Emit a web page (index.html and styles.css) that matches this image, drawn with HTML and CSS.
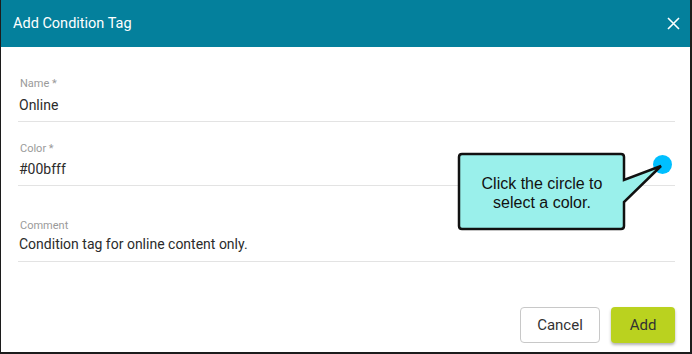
FILE: index.html
```html
<!DOCTYPE html>
<html lang="en">
<head>
    <meta charset="UTF-8">
    <meta name="viewport" content="width=device-width, initial-scale=1.0">
    <title>Add Condition Tag</title>
    <link rel="stylesheet" href="styles.css">
</head>
<body>
    <div class="dialog">
        <header class="dialog-header">
            <span class="dialog-title">Add Condition Tag</span>
            <button class="close" aria-label="Close">
                <svg width="13" height="13" viewBox="0 0 13 13">
                    <path d="M1 1 L12 12 M12 1 L1 12" stroke="#fff" stroke-width="1.6" fill="none"/>
                </svg>
            </button>
        </header>

        <div class="form">
            <div class="field">
                <label>Name *</label>
                <div class="value">Online</div>
            </div>

            <div class="field color-field">
                <label>Color *</label>
                <div class="value">#00bfff</div>
                <span class="swatch"></span>
            </div>

            <div class="field comment-field">
                <label>Comment</label>
                <div class="value">Condition tag for online content only.</div>
            </div>
        </div>

        <div class="footer">
            <button class="btn btn-cancel">Cancel</button>
            <button class="btn btn-add">Add</button>
        </div>

        <!-- annotation callout -->
        <svg class="callout" width="692" height="354" viewBox="0 0 692 354">
            <path d="M462 154 H621 Q624 154 624 157 V180 L661 166 L624 202 V226 Q624 229 621 229 H462 Q459 229 459 226 V157 Q459 154 462 154 Z"
                  fill="#9af0eb" stroke="#111" stroke-width="2.5" stroke-linejoin="miter"/>
            <text x="542" y="189" text-anchor="middle">Click the circle to</text>
            <text x="542" y="208" text-anchor="middle">select a color.</text>
        </svg>
    </div>
</body>
</html>
```

FILE: styles.css
```css
body {
    margin: 0;
    padding: 0;
    background: #fff;
    font-family: Roboto, Arial, sans-serif;
}

.dialog {
    position: relative;
    width: 692px;
    height: 354px;
    box-sizing: border-box;
    border-style: solid;
    border-color: #1c1c1c;
    border-width: 0 2px 2px 1px;
    display: flex;
    flex-direction: column;
    background: #fff;
}

.dialog-header {
    height: 47px;
    background-color: #04809c;
    display: flex;
    align-items: center;
    justify-content: space-between;
    padding: 0 10px 0 12px;
    flex-shrink: 0;
}

.dialog-title {
    color: #fff;
    font-size: 14.5px;
}

.close {
    background: none;
    border: none;
    padding: 0;
    width: 13px;
    height: 13px;
    display: flex;
    cursor: pointer;
}

.form {
    padding: 30px 15px 0 17px;
}

.field {
    position: relative;
    padding-bottom: 6px;
    border-bottom: 1px solid #e3e3e3;
    margin-bottom: 20px;
}

.field label {
    display: block;
    font-size: 11px;
    line-height: 14px;
    color: #9a9a9a;
    padding-left: 2px;
}

.field .value {
    margin-top: 4px;
    font-size: 14px;
    line-height: 20px;
    color: #2b2b2b;
    padding-left: 1px;
}

.color-field .value {
    margin-top: 3px;
}

.color-field {
    margin-bottom: 33px;
}

.comment-field {
    padding-bottom: 7px;
}

.comment-field .value {
    margin-top: 1px;
}

.swatch {
    position: absolute;
    right: 3px;
    top: 13px;
    width: 19px;
    height: 19px;
    border-radius: 50%;
    background: #00bfff;
}

.footer {
    margin-top: auto;
    display: flex;
    justify-content: flex-end;
    gap: 11px;
    padding: 0 15px 9px 0;
}

.btn {
    height: 36px;
    border-radius: 4px;
    font-family: Roboto, Arial, sans-serif;
    font-size: 15px;
    color: #333;
    cursor: pointer;
}

.btn-cancel {
    width: 80px;
    background: #fff;
    border: 1px solid #c8c8c8;
}

.btn-add {
    width: 64px;
    background: #bad21f;
    border: none;
    box-shadow: 0 2px 3px rgba(0, 0, 0, 0.3);
}

.callout {
    position: absolute;
    left: -1px;
    top: 0;
    pointer-events: none;
}

.callout text {
    font-family: "Liberation Sans", Arial, sans-serif;
    font-size: 16px;
    fill: #111;
}
```
